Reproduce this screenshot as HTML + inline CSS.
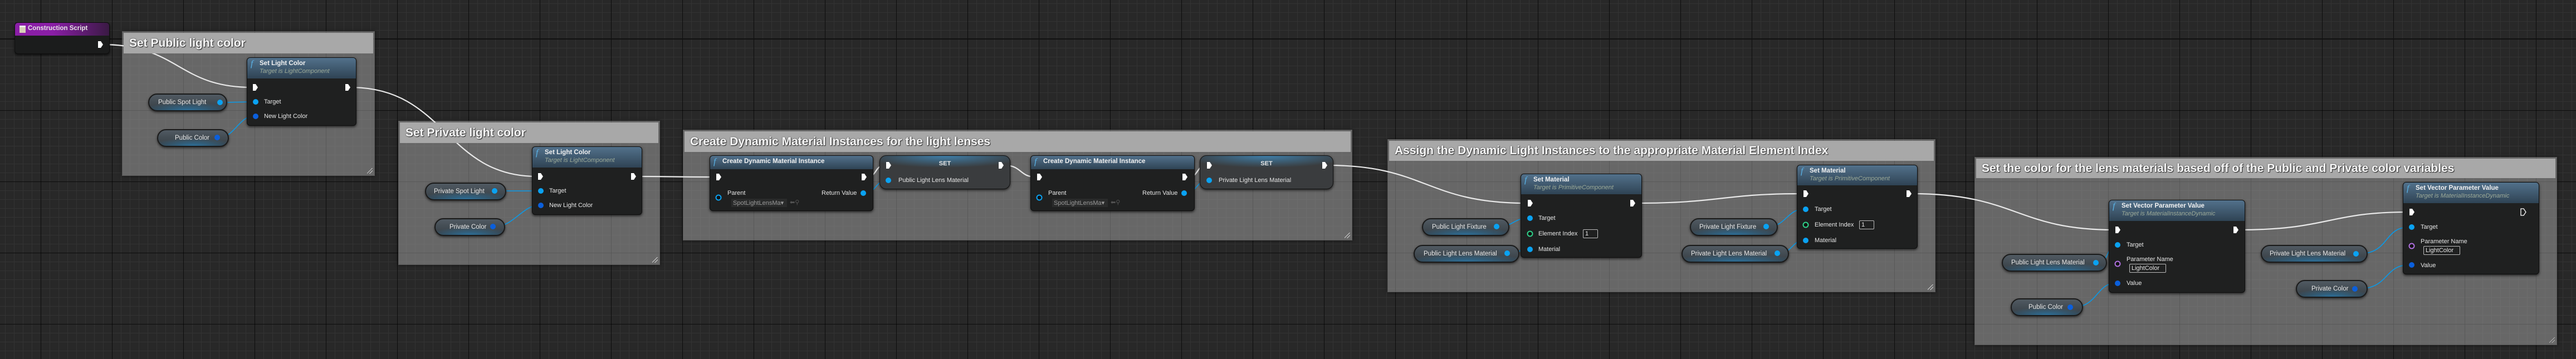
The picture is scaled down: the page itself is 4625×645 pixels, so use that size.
<!DOCTYPE html>
<html><head><meta charset="utf-8">
<style>
*{box-sizing:border-box;margin:0;padding:0}
html,body{width:4625px;height:645px;overflow:hidden}
body{position:relative;font-family:"Liberation Sans",sans-serif;
background-color:#282828;
background-image:
linear-gradient(to bottom,#111 0,#111 2px,transparent 2px),
linear-gradient(to right,rgba(0,0,0,.75) 1px,transparent 1px),
linear-gradient(to bottom,rgba(0,0,0,.75) 1px,transparent 1px),
linear-gradient(to right,#333 1px,transparent 1px),
linear-gradient(to bottom,#333 1px,transparent 1px);
background-size:100% 645px,128px 128px,128px 128px,16px 16px,16px 16px;
background-position:0 69px,73px 0,0 70px,9px 0,0 6px;
background-repeat:no-repeat,repeat,repeat,repeat,repeat;
}
.c{position:absolute;background:rgba(165,165,165,.5);box-shadow:0 0 6px rgba(0,0,0,.6);border:1px solid #5a5a5a}
.ch{position:absolute;z-index:5;left:2px;right:2px;top:2px;background:#a8a8a8;color:#f6f6f6;font-size:21px;font-weight:bold;padding-left:10px;text-shadow:1px 1px 1px #2a2a2a,0 0 2px #444;white-space:nowrap}
.grip{position:absolute;right:3px;bottom:3px;width:10px;height:10px;background:linear-gradient(135deg,transparent 45%,#ccc 45%,#ccc 52%,transparent 52%,transparent 70%,#ccc 70%,#ccc 77%,transparent 77%)}
.n{position:absolute;z-index:3;background:#1f2020;border:1px solid #0e0e0e;border-radius:6px;box-shadow:0 2px 5px rgba(0,0,0,.7);color:#e6e6e6;font-size:11px;overflow:hidden}
.nh{position:absolute;left:0;right:0;top:0;background:linear-gradient(to bottom,#52718b,#2f4354);}
.nh .t{position:absolute;left:22px;top:4px;font-weight:bold;font-size:11.5px;color:#f2f2f2;white-space:nowrap}
.nh .s{position:absolute;left:22px;top:18px;font-style:italic;font-size:11px;color:#9caa98;white-space:nowrap}
.nh .f{position:absolute;left:6px;top:2px;font-style:italic;font-family:"Liberation Serif",serif;font-size:16px;color:#5ab4e8}
.l{position:absolute;white-space:nowrap;font-size:11px;color:#e6e6e6}
.box{position:absolute;border:1px solid #bbb;border-radius:2px;font-size:11px;color:#e6e6e6;padding:1px 3px;white-space:nowrap}
.set{position:absolute;z-index:3;border-radius:12px;border:1px solid #111;background:radial-gradient(ellipse 70% 40% at 50% 0%,#3f7ea8,rgba(60,62,64,0) 90%),#3a3c3e;box-shadow:0 2px 5px rgba(0,0,0,.7);color:#eee;font-size:11px}
.v{position:absolute;z-index:3;border-radius:16px;border:2px solid #1a1a1a;background:radial-gradient(ellipse 60% 50% at 50% 100%,#2d6f98,rgba(60,66,72,0) 100%),linear-gradient(#505a62,#363d43);box-shadow:0 2px 4px rgba(0,0,0,.6);color:#e8e8e8;font-size:11.5px;white-space:nowrap}
.v span{position:absolute;top:50%;transform:translateY(-50%)}
</style></head><body>

<!-- comments -->
<div class="c" style="left:219px;top:56px;width:454px;height:260px"><div class="ch" style="height:37px;line-height:37px">Set Public light color</div><div class="grip"></div></div>
<div class="c" style="left:715px;top:217px;width:470px;height:259px"><div class="ch" style="height:37px;line-height:37px">Set Private light color</div><div class="grip"></div></div>
<div class="c" style="left:1226px;top:233px;width:1202px;height:199px"><div class="ch" style="height:37px;line-height:37px">Create Dynamic Material Instances for the light lenses</div><div class="grip"></div></div>
<div class="c" style="left:2491px;top:250px;width:984px;height:275px"><div class="ch" style="height:36px;line-height:36px">Assign the Dynamic Light Instances to the appropriate Material Element Index</div><div class="grip"></div></div>
<div class="c" style="left:3545px;top:282px;width:1046px;height:338px"><div class="ch" style="height:35px;line-height:35px">Set the color for the lens materials based off of the Public and Private color variables</div><div class="grip"></div></div>

<!-- wires -->
<svg style="position:absolute;left:0;top:0;z-index:2" width="4625" height="645" fill="none">
<g stroke="#e8e8e8" stroke-width="2.2">
<path d="M184 80 C320 80 320 157 452 157"/>
<path d="M630 157 C800 157 800 317 964 317"/>
<path d="M1143 317 C1210 317 1210 318 1281 318"/>
<path d="M1556 318 C1575 318 1570 297 1589 297"/>
<path d="M1803 297 C1835 297 1830 318 1860 318"/>
<path d="M2136 318 C2150 318 2150 297 2165 297"/>
<path d="M2384 297 C2560 297 2560 365 2741 365"/>
<path d="M2937 365 C3090 365 3090 348 3236 348"/>
<path d="M3433 348 C3620 348 3620 413 3796 413"/>
<path d="M4020 413 C4180 413 4180 381 4324 381"/>
</g>
<g stroke="#0a9ae8" stroke-width="1.6">
<path d="M400 184 L454 183"/>
<path d="M394 247 C420 247 430 209 454 209"/>
<path d="M893 343 L966 343"/>
<path d="M890 407 C920 407 940 369 966 369"/>
<path d="M1555 347 C1570 347 1575 324 1590 324"/>
<path d="M2131 347 C2146 347 2151 324 2166 324"/>
<path d="M2692 407 C2715 407 2720 392 2742 392"/>
<path d="M2711 455 C2725 455 2730 448 2742 448"/>
<path d="M3176 407 C3205 407 3210 376 3237 376"/>
<path d="M3196 455 C3215 455 3220 432 3237 432"/>
<path d="M3768 472 C3785 472 3785 440 3797 440"/>
<path d="M3722 552 C3765 552 3765 509 3797 509"/>
<path d="M4235 456 C4290 456 4280 408 4325 408"/>
<path d="M4233 519 C4290 519 4280 476 4325 476"/>
</g>
</svg>

<!-- Construction script -->
<div class="n" style="left:26px;top:40px;width:171px;height:57px;background:#1b1c1c">
<div style="position:absolute;left:0;right:0;top:0;height:23px;background:linear-gradient(to right,#8a1ea6 40%,#3a1a44)"></div>
<div style="position:absolute;left:8px;top:5px;width:11px;height:13px;background:#d8d0b8;border-top:3px solid #eee"></div>
<div class="l" style="left:23px;top:4px;font-weight:bold;font-size:11.5px">Construction Script</div>
</div>

<!-- Set Light Color -->
<div class="n" style="left:443px;top:103px;width:197px;height:123px">
<div class="nh" style="height:37px"><span class="f">f</span><span class="t">Set Light Color</span><span class="s">Target is LightComponent</span></div>
<div class="l" style="left:30px;top:73px">Target</div>
<div class="l" style="left:30px;top:99px">New Light Color</div>
</div>
<div class="n" style="left:955px;top:263px;width:198px;height:123px">
<div class="nh" style="height:37px"><span class="f">f</span><span class="t">Set Light Color</span><span class="s">Target is LightComponent</span></div>
<div class="l" style="left:30px;top:73px">Target</div>
<div class="l" style="left:30px;top:99px">New Light Color</div>
</div>

<div class="v" style="left:266px;top:168px;width:142px;height:32px"><span style="left:16px">Public Spot Light</span></div>
<div class="v" style="left:282px;top:232px;width:129px;height:32px"><span style="left:30px">Public Color</span></div>
<div class="v" style="left:763px;top:328px;width:146px;height:32px"><span style="left:14px">Private Spot Light</span></div>
<div class="v" style="left:780px;top:392px;width:127px;height:32px"><span style="left:25px">Private Color</span></div>

<!-- CDMI -->
<div class="n" style="left:1274px;top:279px;width:294px;height:100px">
<div class="nh" style="height:24px"><span class="f">f</span><span class="t">Create Dynamic Material Instance</span></div>
<div class="l" style="left:31px;top:61px">Parent</div>
<div class="l" style="left:200px;top:61px">Return Value</div>
<div class="l" style="left:38px;top:77px;background:#2a2b2b;color:#999;padding:1px 3px;width:100px;overflow:hidden">SpotLightLensMa▾</div>
<div class="l" style="left:143px;top:77px;color:#555">⬅⚲</div>
</div>
<div class="set" style="left:1579px;top:279px;width:235px;height:61px"><div class="l" style="left:0;right:0;text-align:center;top:8px;font-weight:bold">SET</div><div class="l" style="left:33px;top:38px">Public Light Lens Material</div></div>
<div class="n" style="left:1850px;top:279px;width:295px;height:100px">
<div class="nh" style="height:24px"><span class="f">f</span><span class="t">Create Dynamic Material Instance</span></div>
<div class="l" style="left:31px;top:61px">Parent</div>
<div class="l" style="left:200px;top:61px">Return Value</div>
<div class="l" style="left:38px;top:77px;background:#2a2b2b;color:#999;padding:1px 3px;width:100px;overflow:hidden">SpotLightLensMa▾</div>
<div class="l" style="left:143px;top:77px;color:#555">⬅⚲</div>
</div>
<div class="set" style="left:2154px;top:279px;width:240px;height:61px"><div class="l" style="left:0;right:0;text-align:center;top:8px;font-weight:bold">SET</div><div class="l" style="left:33px;top:38px">Private Light Lens Material</div></div>

<!-- Set Material -->
<div class="n" style="left:2730px;top:312px;width:218px;height:151px">
<div class="nh" style="height:36px"><span class="f">f</span><span class="t">Set Material</span><span class="s">Target is PrimitiveComponent</span></div>
<div class="l" style="left:31px;top:73px">Target</div>
<div class="l" style="left:31px;top:101px">Element Index</div>
<div class="box" style="left:111px;top:99px;width:27px">1</div>
<div class="l" style="left:31px;top:129px">Material</div>
</div>
<div class="n" style="left:3226px;top:296px;width:217px;height:151px">
<div class="nh" style="height:36px"><span class="f">f</span><span class="t">Set Material</span><span class="s">Target is PrimitiveComponent</span></div>
<div class="l" style="left:31px;top:73px">Target</div>
<div class="l" style="left:31px;top:101px">Element Index</div>
<div class="box" style="left:111px;top:99px;width:27px">1</div>
<div class="l" style="left:31px;top:129px">Material</div>
</div>
<div class="v" style="left:2553px;top:392px;width:157px;height:32px"><span style="left:16px">Public Light Fixture</span></div>
<div class="v" style="left:2538px;top:440px;width:190px;height:32px"><span style="left:16px">Public Light Lens Material</span></div>
<div class="v" style="left:3034px;top:392px;width:158px;height:32px"><span style="left:15px">Private Light Fixture</span></div>
<div class="v" style="left:3019px;top:440px;width:193px;height:32px"><span style="left:15px">Private Light Lens Material</span></div>

<!-- SVPV -->
<div class="n" style="left:3786px;top:359px;width:245px;height:167px">
<div class="nh" style="height:37px"><span class="f">f</span><span class="t">Set Vector Parameter Value</span><span class="s">Target is MaterialInstanceDynamic</span></div>
<div class="l" style="left:31px;top:74px">Target</div>
<div class="l" style="left:31px;top:100px">Parameter Name</div>
<div class="box" style="left:36px;top:114px;width:66px">LightColor</div>
<div class="l" style="left:31px;top:143px">Value</div>
</div>
<div class="n" style="left:4314px;top:327px;width:245px;height:166px">
<div class="nh" style="height:37px"><span class="f">f</span><span class="t">Set Vector Parameter Value</span><span class="s">Target is MaterialInstanceDynamic</span></div>
<div class="l" style="left:31px;top:74px">Target</div>
<div class="l" style="left:31px;top:100px">Parameter Name</div>
<div class="box" style="left:36px;top:114px;width:66px">LightColor</div>
<div class="l" style="left:31px;top:143px">Value</div>
</div>
<div class="v" style="left:3594px;top:456px;width:189px;height:32px"><span style="left:15px">Public Light Lens Material</span></div>
<div class="v" style="left:3610px;top:536px;width:130px;height:32px"><span style="left:30px">Public Color</span></div>
<div class="v" style="left:4059px;top:440px;width:192px;height:32px"><span style="left:14px">Private Light Lens Material</span></div>
<div class="v" style="left:4122px;top:503px;width:129px;height:32px"><span style="left:26px">Private Color</span></div>

<!-- pins -->
<svg style="position:absolute;left:0;top:0;z-index:6" width="4625" height="645">
<defs>
<polygon id="ex" points="-4,-6 1,-6 5,0 1,6 -4,6" fill="#fff"/>
</defs>
<g>
<use href="#ex" x="180" y="80"/>
<use href="#ex" x="458" y="157"/><use href="#ex" x="624" y="157"/>
<use href="#ex" x="970" y="317"/><use href="#ex" x="1137" y="317"/>
<use href="#ex" x="1290" y="318"/><use href="#ex" x="1551" y="318"/>
<use href="#ex" x="1595" y="297"/><use href="#ex" x="1797" y="297"/>
<use href="#ex" x="1866" y="318"/><use href="#ex" x="2127" y="318"/>
<use href="#ex" x="2171" y="297"/><use href="#ex" x="2378" y="297"/>
<use href="#ex" x="2747" y="365"/><use href="#ex" x="2931" y="365"/>
<use href="#ex" x="3242" y="348"/><use href="#ex" x="3427" y="348"/>
<use href="#ex" x="3802" y="413"/><use href="#ex" x="4014" y="413"/>
<use href="#ex" x="4330" y="381"/>
<polygon points="4526,375 4531,375 4535,381 4531,387 4526,387" fill="none" stroke="#fff" stroke-width="1.3"/>
</g>
<g fill="#0aa2f2">
<circle cx="459" cy="183" r="5"/><circle cx="395" cy="184" r="5"/>
<circle cx="971" cy="343" r="5"/><circle cx="888" cy="343" r="5"/>
<circle cx="1550" cy="347" r="5"/><circle cx="2126" cy="347" r="5"/>
<circle cx="1595" cy="324" r="5"/><circle cx="2171" cy="324" r="5"/>
<circle cx="2747" cy="392" r="5"/><circle cx="2747" cy="448" r="5"/>
<circle cx="3242" cy="376" r="5"/><circle cx="3242" cy="432" r="5"/>
<circle cx="2687" cy="407" r="5"/><circle cx="2706" cy="455" r="5"/>
<circle cx="3171" cy="407" r="5"/><circle cx="3191" cy="455" r="5"/>
<circle cx="3802" cy="440" r="5"/><circle cx="4330" cy="408" r="5"/>
<circle cx="3763" cy="472" r="5"/><circle cx="4230" cy="456" r="5"/>
</g>
<g fill="#0b5fdc">
<circle cx="459" cy="209" r="5"/><circle cx="390" cy="247" r="5"/>
<circle cx="971" cy="369" r="5"/><circle cx="885" cy="407" r="5"/>
<circle cx="3802" cy="509" r="5"/><circle cx="3717" cy="552" r="5"/>
<circle cx="4330" cy="476" r="5"/><circle cx="4228" cy="519" r="5"/>
</g>
<g fill="#111" stroke-width="2">
<circle cx="1290" cy="355" r="4.5" stroke="#0aa2f2"/><circle cx="1866" cy="355" r="4.5" stroke="#0aa2f2"/>
<circle cx="2747" cy="420" r="4.5" stroke="#2fd28a"/><circle cx="3242" cy="404" r="4.5" stroke="#2fd28a"/>
<circle cx="3802" cy="474" r="4.5" stroke="#b070e0"/><circle cx="4330" cy="442" r="4.5" stroke="#b070e0"/>
</g>
</svg>
</body></html>
